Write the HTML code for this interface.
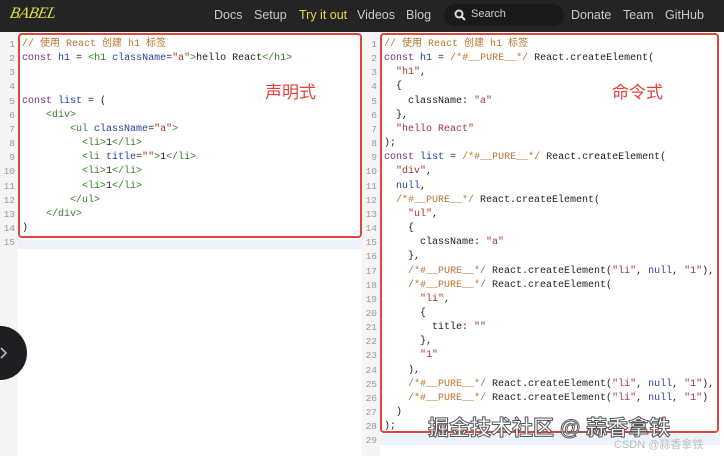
<!DOCTYPE html>
<html><head><meta charset="utf-8"><style>
*{margin:0;padding:0;box-sizing:border-box}
body{width:724px;height:456px;overflow:hidden;background:#fff;position:relative;font-family:"Liberation Sans","Noto Sans CJK SC",sans-serif}
.hdr{position:absolute;left:0;top:0;width:724px;height:32px;background:#242424}
.logo{position:absolute;left:10px;top:5px;color:#e5d84a;font-style:italic;font-family:"Liberation Serif",serif;font-size:16px;letter-spacing:-0.5px;transform:skewX(-12deg)}
.nav{position:absolute;top:8px;color:#c9c9c9;font-size:12.5px}
.search{position:absolute;left:444px;top:4px;width:120px;height:22px;border-radius:11px;background:#1a1a1a}
.gut{position:absolute;top:0;bottom:0;width:18px;background:#f5f5f5}
.code{position:absolute;top:36px;font-family:"Liberation Mono","Noto Sans CJK SC",monospace;font-size:10px;line-height:14.15px;white-space:pre;color:#222}
.ln{position:absolute;top:36px;font-family:"Liberation Mono",monospace;font-size:9.5px;line-height:14.15px;color:#999;text-align:right;width:14px;white-space:pre}
.box{position:absolute;border:2px solid #e0443a;border-radius:4px}
.c{color:#b8732e}.k{color:#7a2d8a}.v{color:#1a3fa8}.t{color:#3a7d2a}.s{color:#a33}.a{color:#2b3ea0}
.lbl{position:absolute;color:#e0443a;font-size:17px}
</style></head><body>
<div class="hdr">
<div class="logo">BABEL</div>
<div class="nav" style="left:214px">Docs</div>
<div class="nav" style="left:254px">Setup</div>
<div class="nav" style="left:299px;color:#e5d84a">Try it out</div>
<div class="nav" style="left:357px">Videos</div>
<div class="nav" style="left:406px">Blog</div>
<div class="search"><svg style="position:absolute;left:10px;top:5px" width="12" height="12" viewBox="0 0 12 12"><circle cx="5" cy="5" r="3.5" stroke="#ddd" stroke-width="2" fill="none"/><path d="M7.5 7.5L11 11" stroke="#ddd" stroke-width="2"/></svg><span style="position:absolute;left:27px;top:4px;color:#ccc;font-size:11px">Search</span></div>
<div class="nav" style="left:571px">Donate</div>
<div class="nav" style="left:623px">Team</div>
<div class="nav" style="left:665px">GitHub</div>
</div>

<div class="gut" style="left:0;top:32px"></div>
<div class="gut" style="left:362px;top:32px"></div>
<div style="position:absolute;left:18px;top:240px;width:344px;height:9px;background:#eef3fb"></div>
<div style="position:absolute;left:380px;top:434px;width:340px;height:11px;background:#eef3fb"></div>

<div class="ln" style="left:1px;top:38px">1
2
3
4
5
6
7
8
9
10
11
12
13
14
15</div>
<div class="code" style="left:22px;top:38px"><span class="c">// 使用 React 创建 h1 标签</span>
<span class="k">const</span> <span class="v">h1</span> = <span class="t">&lt;h1</span> <span class="a">className</span>=<span class="s">"a"</span><span class="t">&gt;</span>hello React<span class="t">&lt;/h1&gt;</span>


<span class="k">const</span> <span class="v">list</span> = (
    <span class="t">&lt;div&gt;</span>
        <span class="t">&lt;ul</span> <span class="a">className</span>=<span class="s">"a"</span><span class="t">&gt;</span>
          <span class="t">&lt;li&gt;</span>1<span class="t">&lt;/li&gt;</span>
          <span class="t">&lt;li</span> <span class="a">title</span>=<span class="s">""</span><span class="t">&gt;</span>1<span class="t">&lt;/li&gt;</span>
          <span class="t">&lt;li&gt;</span>1<span class="t">&lt;/li&gt;</span>
          <span class="t">&lt;li&gt;</span>1<span class="t">&lt;/li&gt;</span>
        <span class="t">&lt;/ul&gt;</span>
    <span class="t">&lt;/div&gt;</span>
)</div>

<div class="ln" style="left:363px;top:38px">1
2
3
4
5
6
7
8
9
10
11
12
13
14
15
16
17
18
19
20
21
22
23
24
25
26
27
28
29</div>
<div class="code" style="left:384px;top:38px"><span class="c">// 使用 React 创建 h1 标签</span>
<span class="k">const</span> <span class="v">h1</span> = <span class="c">/*#__PURE__*/</span> React.createElement(
  <span class="s">"h1"</span>,
  {
    className: <span class="s">"a"</span>
  },
  <span class="s">"hello React"</span>
);
<span class="k">const</span> <span class="v">list</span> = <span class="c">/*#__PURE__*/</span> React.createElement(
  <span class="s">"div"</span>,
  <span class="a">null</span>,
  <span class="c">/*#__PURE__*/</span> React.createElement(
    <span class="s">"ul"</span>,
    {
      className: <span class="s">"a"</span>
    },
    <span class="c">/*#__PURE__*/</span> React.createElement(<span class="s">"li"</span>, <span class="a">null</span>, <span class="s">"1"</span>),
    <span class="c">/*#__PURE__*/</span> React.createElement(
      <span class="s">"li"</span>,
      {
        title: <span class="s">""</span>
      },
      <span class="s">"1"</span>
    ),
    <span class="c">/*#__PURE__*/</span> React.createElement(<span class="s">"li"</span>, <span class="a">null</span>, <span class="s">"1"</span>),
    <span class="c">/*#__PURE__*/</span> React.createElement(<span class="s">"li"</span>, <span class="a">null</span>, <span class="s">"1"</span>)
  )
);</div>

<div class="box" style="left:18px;top:33px;width:344px;height:205px"></div>
<div class="box" style="left:380px;top:33px;width:339px;height:400px"></div>
<div class="lbl" style="left:265px;top:78px">声明式</div>
<div class="lbl" style="left:612px;top:78px">命令式</div>

<div style="position:absolute;left:-27px;top:326px;width:54px;height:54px;border-radius:50%;background:#1e1f22"></div>
<svg style="position:absolute;left:0;top:347px" width="8" height="12"><path d="M1 1L6 6L1 11" stroke="#bbb" stroke-width="1.6" fill="none"/></svg>

<div style="position:absolute;left:428px;top:412px;font-size:21px;color:#fff;-webkit-text-stroke:1px #555;font-weight:bold;white-space:nowrap">掘金技术社区 @ 蒜香拿铁</div>
<div style="position:absolute;left:614px;top:436px;font-size:11px;color:#bbb;white-space:nowrap">CSDN @蒜香拿铁</div>
</body></html>
